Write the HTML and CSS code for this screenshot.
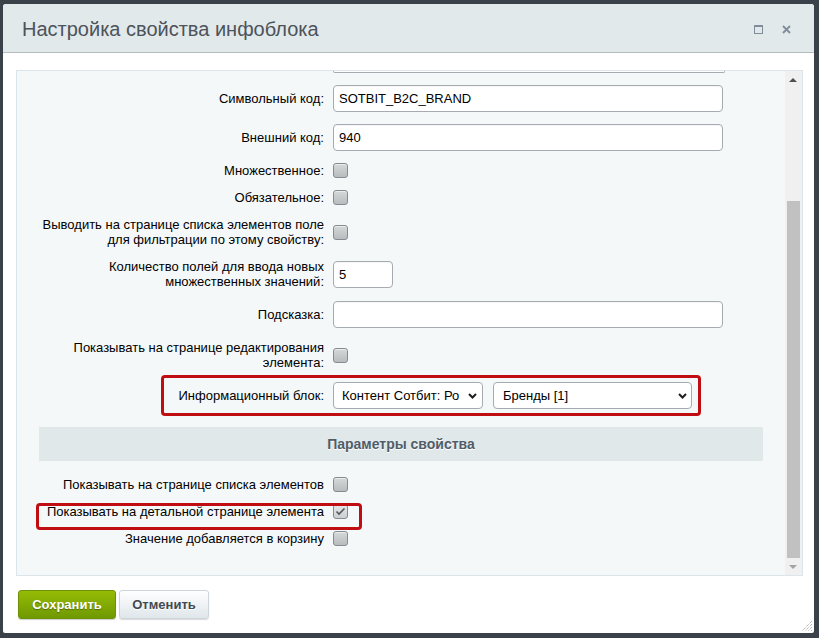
FILE: index.html
```html
<!DOCTYPE html>
<html lang="ru">
<head>
<meta charset="utf-8">
<title>Настройка свойства инфоблока</title>
<link rel="stylesheet" href="styles.css">
</head>
<body>
<div class="dialog">
  <div class="head">
    <div class="title">Настройка свойства инфоблока</div>
    <div class="tools">
      <svg class="ico" width="9" height="9" viewBox="0 0 9 9"><rect x="0.5" y="0.5" width="8" height="8" fill="none" stroke="#7f8d9b" stroke-width="1"/><rect x="0" y="0" width="9" height="2" fill="#7f8d9b"/></svg>
      <svg class="ico" width="9" height="9" viewBox="0 0 9 9"><path d="M1 1 L8 8 M8 1 L1 8" stroke="#7f8d9b" stroke-width="1.8" fill="none"/></svg>
    </div>
  </div>

  <div class="panel">
    <div class="content">
      <div class="tailrow"><div class="tail"></div></div>

      <div class="row">
        <div class="lbl">Символьный код:</div>
        <input class="txt wide" value="SOTBIT_B2C_BRAND" readonly>
      </div>
      <div class="row">
        <div class="lbl">Внешний код:</div>
        <input class="txt wide" value="940" readonly>
      </div>
      <div class="row">
        <div class="lbl">Множественное:</div>
        <span class="cb"></span>
      </div>
      <div class="row">
        <div class="lbl">Обязательное:</div>
        <span class="cb"></span>
      </div>
      <div class="row">
        <div class="lbl">Выводить на странице списка элементов поле<br>для фильтрации по этому свойству:</div>
        <span class="cb"></span>
      </div>
      <div class="row">
        <div class="lbl">Количество полей для ввода новых<br>множественных значений:</div>
        <input class="txt short" value="5" readonly>
      </div>
      <div class="row">
        <div class="lbl">Подсказка:</div>
        <input class="txt wide" value="" readonly>
      </div>
      <div class="row">
        <div class="lbl">Показывать на странице редактирования<br>элемента:</div>
        <span class="cb"></span>
      </div>
      <div class="row hl">
        <div class="lbl">Информационный блок:</div>
        <div class="sel s1"><span class="sel-text">Контент Сотбит: Ро</span><svg class="chev" width="9" height="6" viewBox="0 0 9 6"><path d="M1 1 L4.5 4.5 L8 1" stroke="#1e1e1e" stroke-width="2" fill="none"/></svg></div>
        <div class="sel s2"><span class="sel-text">Бренды [1]</span><svg class="chev" width="9" height="6" viewBox="0 0 9 6"><path d="M1 1 L4.5 4.5 L8 1" stroke="#1e1e1e" stroke-width="2" fill="none"/></svg></div>
        <div class="redbox rb1"></div>
      </div>

      <div class="band">Параметры свойства</div>

      <div class="row">
        <div class="lbl">Показывать на странице списка элементов</div>
        <span class="cb"></span>
      </div>
      <div class="row hl">
        <div class="lbl">Показывать на детальной странице элемента</div>
        <span class="cb on"><svg width="11" height="9" viewBox="0 0 11 9"><path d="M1.5 4.5 L4 7 L9.5 1.5" stroke="#55595d" stroke-width="1.6" fill="none"/></svg></span>
        <div class="redbox rb2"></div>
      </div>
      <div class="row">
        <div class="lbl">Значение добавляется в корзину</div>
        <span class="cb"></span>
      </div>
    </div>
    <div class="sbar">
      <div class="sbtn"><span class="arr-up"></span></div>
      <div class="strack"><div class="thumb"></div></div>
      <div class="sbtn"><span class="arr-down"></span></div>
    </div>
  </div>

  <div class="foot">
    <button class="btn save">Сохранить</button>
    <button class="btn cancel">Отменить</button>
  </div>

  <svg class="grip" width="12" height="12" viewBox="0 0 12 12">
    <path d="M11 1 L1 11 M11 4 L4 11 M11 7 L7 11 M11 10 L10 11" stroke="#9a9a9a" stroke-width="1" stroke-dasharray="1 1" fill="none"/>
  </svg>
</div>
</body>
</html>
```

FILE: styles.css
```css
html, body {
  margin: 0;
  padding: 0;
}
body {
  background: #3a4149;
  width: 819px;
  height: 638px;
  overflow: hidden;
  font-family: "Liberation Sans", Arial, sans-serif;
  font-size: 13px;
  color: #000;
  padding-top: 4px;
  padding-left: 3px;
  box-sizing: border-box;
}
.dialog {
  position: relative;
  width: 811px;
  height: 629px;
  background: #fff;
  border-radius: 3px 3px 2px 2px;
  box-sizing: border-box;
  overflow: hidden;
}
.head {
  display: flex;
  align-items: center;
  height: 49px;
  box-sizing: border-box;
  background: #e2e9eb;
  border-bottom: 1px solid #b4bcc0;
  padding: 0 23px 0 19px;
}
.title {
  font-size: 20px;
  line-height: 24px;
  color: #4c535a;
  padding-top: 1px;
}
.tools {
  margin-left: auto;
  display: flex;
  gap: 19px;
  align-items: center;
  padding-top: 2px;
}
.ico {
  display: block;
}
.panel {
  display: flex;
  margin: 17px 11px 0 13px;
  height: 506px;
  box-sizing: border-box;
  border: 1px solid #dbe5ea;
  background: #f5f8f9;
  overflow: hidden;
}
.content {
  flex: 1;
  min-width: 0;
}
.tailrow {
  padding: 0 0 6px 316px;
}
.tail {
  width: 390px;
  height: 1px;
  box-sizing: content-box;
  border: 1px solid #a5abb0;
  border-top: none;
  border-radius: 0 0 3px 3px;
  background: #fff;
}
.row {
  display: flex;
  align-items: center;
  padding: 6px 0;
}
.hl {
  position: relative;
}
.lbl {
  width: 307px;
  margin-right: 9px;
  text-align: right;
  line-height: 15px;
  flex: none;
}
.txt {
  display: block;
  box-sizing: border-box;
  height: 27px;
  border: 1px solid #a5abb0;
  border-radius: 4px;
  background: #fff;
  padding: 0 5px;
  margin: 0;
  font-family: "Liberation Sans", Arial, sans-serif;
  font-size: 13px;
  color: #000;
  outline: none;
  box-shadow: inset 0 1px 1px rgba(0,0,0,0.04);
}
.wide { width: 390px; }
.short { width: 60px; }
.cb {
  display: flex;
  align-items: center;
  justify-content: center;
  width: 15px;
  height: 15px;
  box-sizing: border-box;
  border: 1px solid #858b90;
  border-radius: 3px;
  background: linear-gradient(#d6d8d9, #b8bcbe);
  box-shadow: inset 0 1px 0 rgba(255,255,255,0.5);
  flex: none;
}
.cb.on {
  background: linear-gradient(#e4e6e7, #cdd0d2);
}
.cb svg { display: block; }
.sel {
  display: flex;
  align-items: center;
  box-sizing: border-box;
  height: 27px;
  border: 1px solid #a5abb0;
  border-radius: 4px;
  background: #fff;
}
.s1 {
  width: 150px;
  padding: 0 5px 0 8px;
}
.s1 .sel-text {
  width: 124px;
}
.s2 {
  width: 199px;
  margin-left: 10px;
  padding: 0 4px 0 9px;
}
.s2 .sel-text {
  flex: 1;
}
.sel-text {
  white-space: nowrap;
  overflow: hidden;
  line-height: 16px;
}
.chev {
  margin-left: auto;
  display: block;
  flex: none;
}
.redbox {
  position: absolute;
  box-sizing: border-box;
  border: 3px solid #c00d12;
  border-radius: 4px;
  pointer-events: none;
}
.rb1 {
  left: 144px;
  top: -1px;
  width: 540px;
  height: 41px;
}
.rb2 {
  left: 19px;
  top: 5px;
  width: 326px;
  height: 27px;
}
.band {
  margin: 12px 22px 10px 22px;
  height: 34px;
  line-height: 34px;
  background: #e0e8ea;
  text-align: center;
  font-weight: bold;
  font-size: 14px;
  color: #4f5d68;
  text-shadow: 0 1px 0 #fff;
}
.sbar {
  width: 17px;
  flex: none;
  display: flex;
  flex-direction: column;
  background: #f0f0f0;
}
.sbtn {
  height: 17px;
  display: flex;
  align-items: center;
  justify-content: center;
  flex: none;
}
.arr-up {
  width: 0;
  height: 0;
  border-left: 4px solid transparent;
  border-right: 4px solid transparent;
  border-bottom: 4px solid #505050;
  margin-right: 1px;
}
.arr-down {
  width: 0;
  height: 0;
  border-left: 4px solid transparent;
  border-right: 4px solid transparent;
  border-top: 4px solid #a3a3a3;
  margin-right: 1px;
}
.strack {
  flex: 1;
  display: flex;
  flex-direction: column;
  justify-content: flex-end;
  padding: 0 2px 0 2px;
}
.thumb {
  height: 357px;
  background: #c1c1c1;
}
.foot {
  display: flex;
  gap: 3px;
  padding: 14px 0 0 15px;
}
.btn {
  height: 29px;
  box-sizing: border-box;
  border-radius: 3px;
  font-family: "Liberation Sans", Arial, sans-serif;
  font-size: 13px;
  font-weight: bold;
  padding: 0;
  margin: 0;
  cursor: pointer;
}
.save {
  width: 98px;
  color: #fff;
  background: linear-gradient(#95bb05, #6f9902);
  border: 1px solid #6f9108;
  text-shadow: 0 1px 1px rgba(0,0,0,0.35);
  box-shadow: 0 1px 1px rgba(0,0,0,0.2);
}
.cancel {
  width: 90px;
  color: #3f4a52;
  background: linear-gradient(#ffffff, #dfe6ea);
  border: 1px solid #cdd5da;
  text-shadow: 0 1px 0 #fff;
  box-shadow: 0 1px 1px rgba(0,0,0,0.15);
}
.grip {
  position: absolute;
  right: 1px;
  bottom: 1px;
  display: block;
}
```
